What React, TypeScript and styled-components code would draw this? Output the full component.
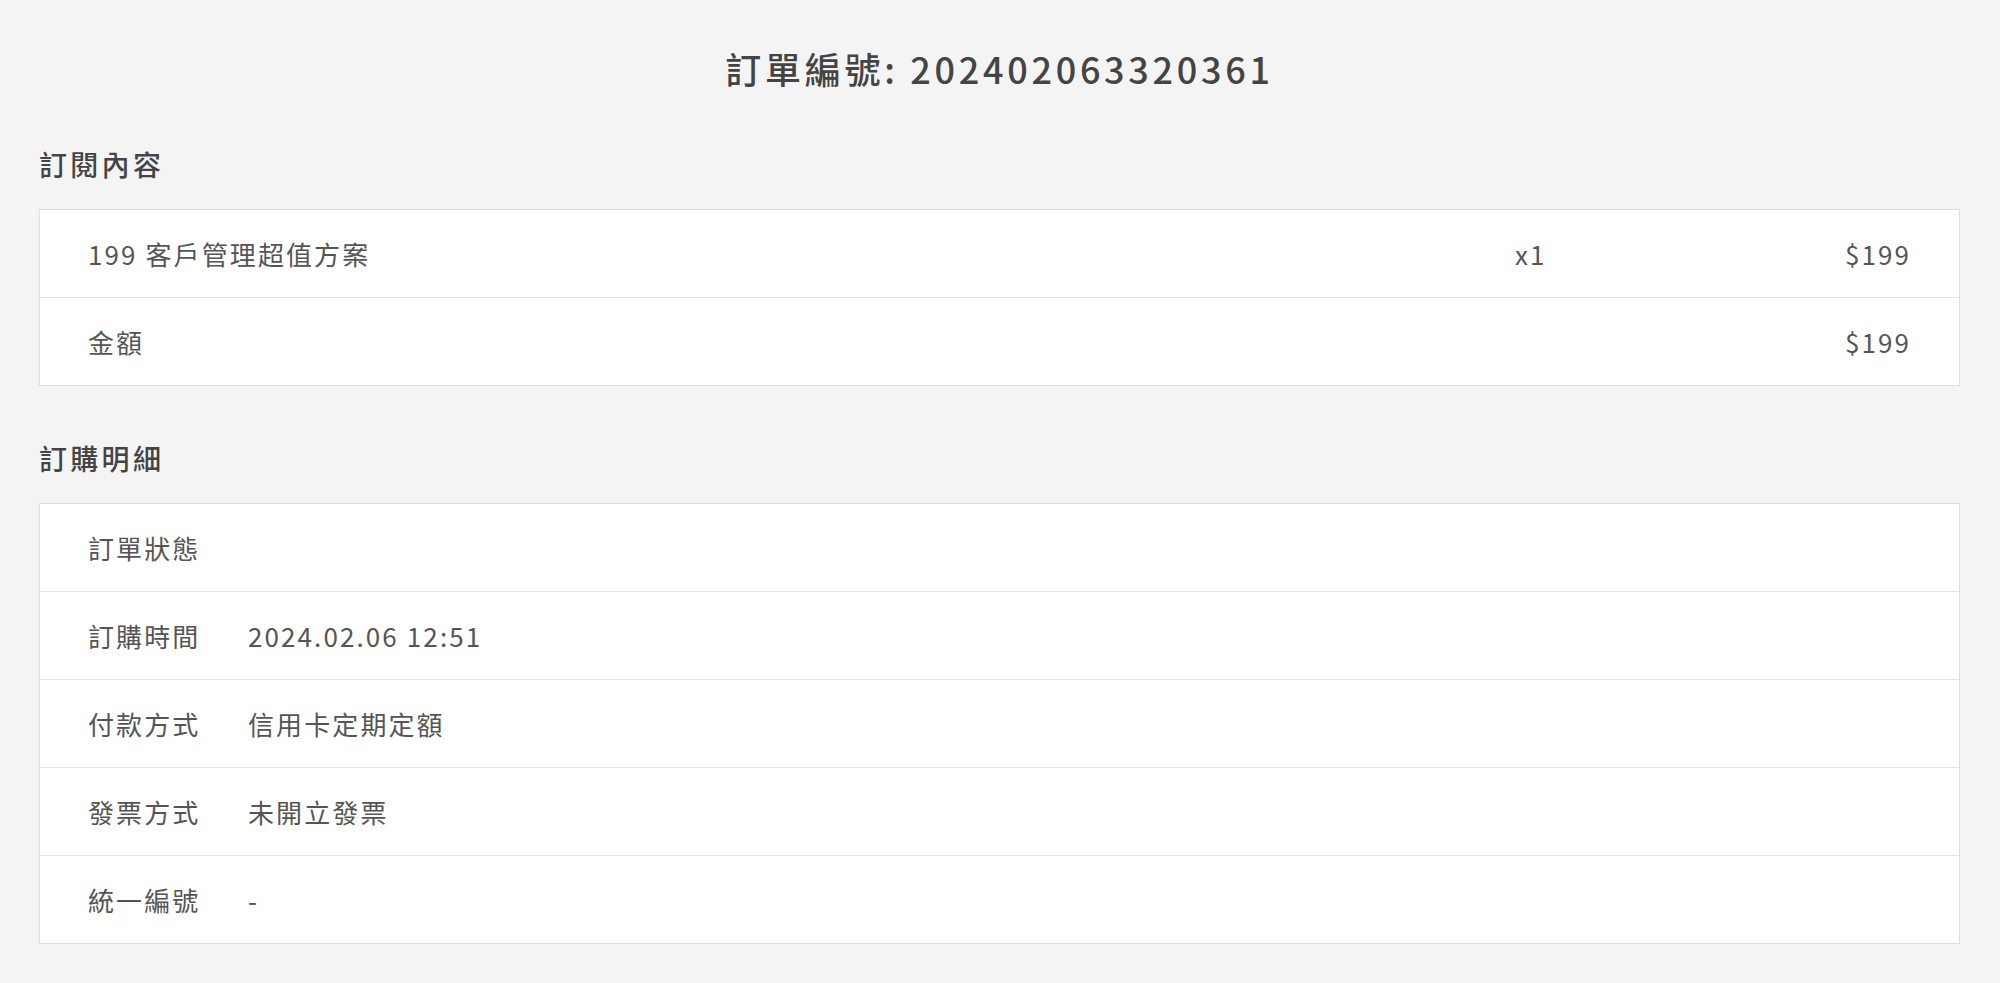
import styled, { createGlobalStyle } from 'styled-components';

const GlobalStyle = createGlobalStyle`
  html,
  body {
    margin: 0;
    padding: 0;
    background-color: #f4f4f4;
  }
  body {
    font-family: 'Noto Sans CJK TC', 'Noto Sans', sans-serif;
    color: #555;
  }
  * {
    box-sizing: border-box;
  }
`;

interface OrderItem {
  name: string;
  qty: number;
  price: string;
}

const items: OrderItem[] = [{ name: '199 客戶管理超值方案', qty: 1, price: '$199' }];

const details: [string, string][] = [
  ['訂單狀態', ''],
  ['訂購時間', '2024.02.06 12:51'],
  ['付款方式', '信用卡定期定額'],
  ['發票方式', '未開立發票'],
  ['統一編號', '-'],
];

const App = () => {
  return (
    <>
      <GlobalStyle />
      <PageLayout>
        <Title>訂單編號: 202402063320361</Title>

        <SectionTitle>訂閱內容</SectionTitle>
        <Panel>
          {items.map((item) => (
            <ItemRow key={item.name}>
              <span>{item.name}</span>
              <span>x{item.qty}</span>
              <Price>{item.price}</Price>
            </ItemRow>
          ))}
          <TotalRow>
            <span>金額</span>
            <Price>$199</Price>
          </TotalRow>
        </Panel>

        <SectionTitle>訂購明細</SectionTitle>
        <Panel>
          {details.map(([label, value]) => (
            <DetailRow key={label}>
              <span>{label}</span>
              <span>{value}</span>
            </DetailRow>
          ))}
        </Panel>
      </PageLayout>
    </>
  );
};

const PageLayout = styled.main`
  min-height: 100vh;
  padding: 44px 40px 39px 39px;
`;

const Title = styled.h1`
  margin: 0;
  text-align: center;
  font-size: 36px;
  line-height: 48px;
  font-weight: 500;
  letter-spacing: 3.7px;
  color: #444;
`;

const SectionTitle = styled.h2`
  margin: 54px 0 27px;
  font-size: 28px;
  line-height: 36px;
  font-weight: 500;
  letter-spacing: 3.3px;
  color: #444;
`;

const Panel = styled.section`
  background-color: #fff;
  border: 1px solid #dedede;
`;

const Row = styled.div`
  height: 88px;
  padding: 0 48px;
  display: grid;
  align-items: center;
  font-size: 26px;
  letter-spacing: 2.1px;
  color: #555;
  border-bottom: 1px solid #e3e3e3;

  &:last-child {
    height: 87px;
    border-bottom: none;
  }
`;

const ItemRow = styled(Row)`
  grid-template-columns: 1fr 200px 196px;
`;

const TotalRow = styled(Row)`
  grid-template-columns: 1fr auto;
`;

const DetailRow = styled(Row)`
  grid-template-columns: 160px 1fr;
`;

const Price = styled.span`
  text-align: right;
`;

export default App;
